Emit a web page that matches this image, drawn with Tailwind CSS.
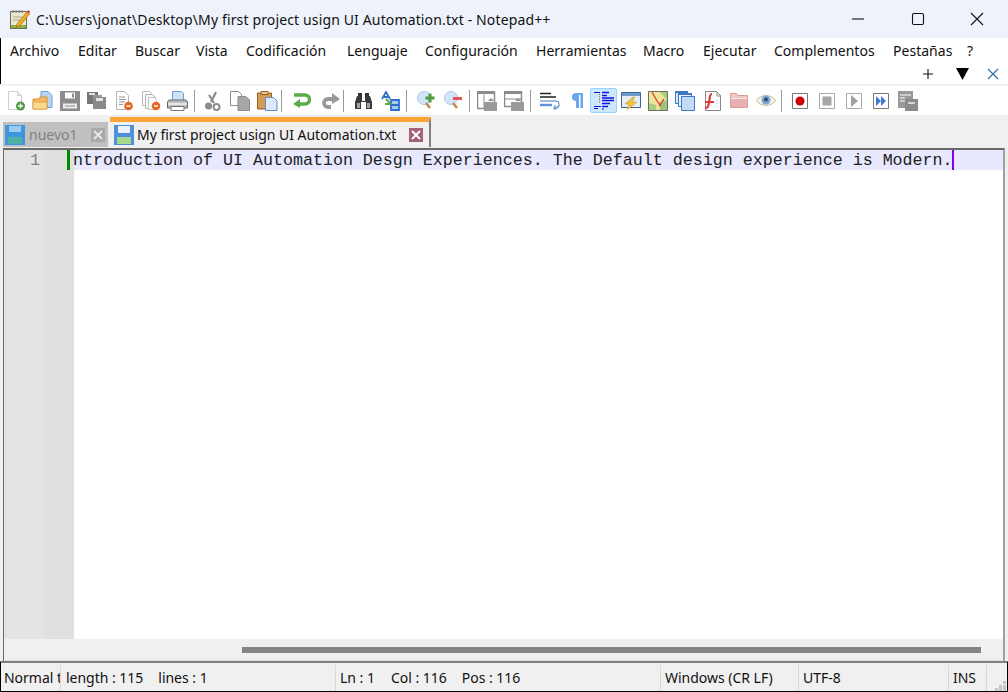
<!DOCTYPE html>
<html lang="es">
<head>
  <meta charset="UTF-8" />
  <title>Notepad++</title>
  <script src="https://cdn.jsdelivr.net/npm/@tailwindcss/browser@4"></script>
</head>
<body class="bg-[#f0f0f0]">
  <div class="w-[1008px] h-[692px] overflow-hidden flex flex-col font-['Noto_Sans','Open_Sans',sans-serif] text-[#111] border-b border-black">

    <!-- title bar -->
    <div class="h-[38px] shrink-0 bg-[#eef3fb] flex items-center">
      <svg class="ml-[10px] w-[20px] h-[20px]" viewBox="0 0 20 20">
        <rect x="0.5" y="2.5" width="16" height="17" fill="#e9e6d0" stroke="#6b6b5c"/>
        <path d="M1 16h15v3H1z" fill="#8fae3f"/>
        <path d="M3 1v3M6 1v3M9 1v3M12 1v3" stroke="#777"/>
        <path d="M3 8h9M3 11h7" stroke="#a9a78f"/>
        <path d="M7 15 17 3l2.500 2L10 16.500 6.500 18z" fill="#f0b11f" stroke="#a8620c" stroke-width="0.700"/>
        <path d="M17 3l1.500-2 1.500 1.500-1 2.500z" fill="#d8452e"/>
      </svg>
      <span class="ml-[6px] text-[14px] tracking-[0.14px] whitespace-nowrap">C:\Users\jonat\Desktop\My first project usign UI Automation.txt - Notepad++</span>
      <div class="ml-auto flex items-center">
        <svg class="w-[14px] h-[14px] mr-[46px]" viewBox="0 0 14 14"><path d="M1 7h12" stroke="#111" stroke-width="1.100"/></svg>
        <svg class="w-[14px] h-[14px] mr-[45px]" viewBox="0 0 14 14"><rect x="1.500" y="1.500" width="11" height="11" rx="1.500" fill="none" stroke="#111" stroke-width="1.100"/></svg>
        <svg class="w-[14px] h-[14px] mr-[24px]" viewBox="0 0 14 14"><path d="M1 1l12 12M13 1 1 13" stroke="#111" stroke-width="1.100"/></svg>
      </div>
    </div>

    <!-- menu -->
    <div class="h-[46px] shrink-0 bg-white border-l border-black">
      <div class="h-[25px] pl-[9px] flex items-center text-[14px] tracking-[0.02px] whitespace-nowrap">
        <span class="w-[68px]">Archivo</span>
        <span class="w-[57px]">Editar</span>
        <span class="w-[61px]">Buscar</span>
        <span class="w-[50px]">Vista</span>
        <span class="w-[101px]">Codificación</span>
        <span class="w-[78px]">Lenguaje</span>
        <span class="w-[111px]">Configuración</span>
        <span class="w-[107px]">Herramientas</span>
        <span class="w-[60px]">Macro</span>
        <span class="w-[71px]">Ejecutar</span>
        <span class="w-[119px]">Complementos</span>
        <span class="w-[74px]">Pestañas</span>
        <span>?</span>
      </div>
      <div class="h-[21px] flex items-center justify-end pr-[9px]">
        <svg class="w-[10px] h-[10px]" viewBox="0 0 10 10"><path d="M5 0v10M0 5h10" stroke="#111" stroke-width="1.100"/></svg>
        <svg class="ml-[23px] w-[13px] h-[13px]" viewBox="0 0 13 13"><path d="M0 1h13L6.500 13z" fill="#000"/></svg>
        <svg class="ml-[18px] w-[12px] h-[12px]" viewBox="0 0 12 12"><path d="M1 1l10 10M11 1 1 11" stroke="#33679c" stroke-width="1.100"/></svg>
      </div>
    </div>

    <!-- toolbar -->
    <div class="h-[32px] shrink-0 pt-[2px] pb-[1px]">
      <div class="h-[29px] bg-white flex items-center pl-[2px]">
        <!-- new -->
        <div class="w-[27px] h-[24px] flex items-center justify-center"><svg class="w-[20px] h-[20px]" viewBox="0 0 20 20">
          <path d="M2.500 0.500h9l4 4v14h-13z" fill="#fff" stroke="#cfcfcf"/><path d="M11.500 0.500v4h4" fill="#eee" stroke="#cfcfcf"/>
          <circle cx="14.500" cy="15" r="4.500" fill="#4d9a42"/><path d="M12 15h5M14.500 12.500v5" stroke="#fff" stroke-width="1.300"/></svg></div>
        <!-- open -->
        <div class="w-[27px] h-[24px] flex items-center justify-center"><svg class="w-[21px] h-[20px]" viewBox="0 0 21 20">
          <path d="M9 0.500h7l4 4v12H9z" fill="#b8d3f3" stroke="#6e9fd8"/>
          <path d="M1 8h6l1-2h7v12H1z" fill="#f4b860" stroke="#d8923a"/><path d="M1 11h14v7H1z" fill="#fbd98a" stroke="#d8923a" stroke-width="0.600"/></svg></div>
        <!-- save -->
        <div class="w-[27px] h-[24px] flex items-center justify-center"><svg class="w-[20px] h-[20px]" viewBox="0 0 20 20">
          <path d="M0 0h20v20H0z" fill="#8c8c8c"/><path d="M5 1.500h10v6H5z" fill="#fff"/><path d="M12 2.500h2v4h-2z" fill="#8c8c8c"/><path d="M3 12.500h14v5H3z" fill="#eee"/><path d="M5 14.500h10v1H5z" fill="#8c8c8c"/></svg></div>
        <!-- save all -->
        <div class="w-[27px] h-[24px] flex items-center justify-center"><svg class="w-[19px] h-[19px]" viewBox="0 0 19 19">
          <path d="M0 1h11v4h-5v8H0z" fill="#777"/><path d="M2 2h6v2H2z" fill="#ddd"/>
          <path d="M6 6h13v12H6z" fill="#8a8a8a"/><path d="M6 4h9v2H6z" fill="#999"/><path d="M9 7h7v3H9z" fill="#e6e6e6"/></svg></div>
        <!-- close -->
        <div class="w-[27px] h-[24px] flex items-center justify-center"><svg class="w-[20px] h-[20px]" viewBox="0 0 20 20">
          <path d="M2.500 0.500h8l4 4v14h-12z" fill="#fff" stroke="#b5b5b5"/><path d="M5 6h6M5 8.500h7M5 11h6M5 13.500h4" stroke="#999"/>
          <circle cx="14.500" cy="15" r="4.300" fill="#e8651f"/><path d="M12.500 15h4" stroke="#fff" stroke-width="1.500"/></svg></div>
        <!-- close all -->
        <div class="w-[27px] h-[24px] flex items-center justify-center"><svg class="w-[20px] h-[20px]" viewBox="0 0 20 20">
          <path d="M1.500 0.500h7l3 3v11h-10z" fill="#fff" stroke="#b5b5b5"/><path d="M4.500 3.500h7l3 3v11h-10z" fill="#f8f8f8" stroke="#b5b5b5"/><path d="M7.500 6.500h6l2 2v10h-8z" fill="#fff" stroke="#c2c2c2"/>
          <circle cx="15" cy="15" r="4.300" fill="#e8651f"/><path d="M13 15h4" stroke="#fff" stroke-width="1.500"/></svg></div>
        <!-- print -->
        <div class="w-[27px] h-[24px] flex items-center justify-center"><svg class="w-[21px] h-[20px]" viewBox="0 0 21 20">
          <path d="M5.500 0.500h9l2 2v8h-11z" fill="#cfe2f6" stroke="#6e9fd8"/>
          <path d="M2 9h17l1.500 2v6h-20v-6z" fill="#b9bec4" stroke="#666"/><path d="M1 12h19v2H1z" fill="#e8e8e8"/><path d="M4 15.500h13v4H4z" fill="#fff" stroke="#777"/></svg></div>
        <div class="w-px h-[22px] bg-[#999] ml-[3px] mr-[4px]"></div>
        <!-- cut -->
        <div class="w-[27px] h-[24px] flex items-center justify-center"><svg class="w-[17px] h-[20px]" viewBox="0 0 17 20">
          <path d="M12 1 7 11M5 4l5 8" stroke="#8c8c8c" stroke-width="2.200" fill="none"/><circle cx="4.500" cy="15" r="3.500" fill="#8c8c8c"/><circle cx="12.500" cy="16" r="3" fill="none" stroke="#8c8c8c" stroke-width="2"/></svg></div>
        <!-- copy -->
        <div class="w-[27px] h-[24px] flex items-center justify-center"><svg class="w-[20px] h-[20px]" viewBox="0 0 20 20">
          <path d="M0.500 0.500h8l3 3v11H0.500z" fill="#fff" stroke="#8c8c8c"/><path d="M8 5.500h8l3.500 3.500v10.500H8z" fill="#a6a6a6" stroke="#8c8c8c"/></svg></div>
        <!-- paste -->
        <div class="w-[27px] h-[24px] ml-[1px] flex items-center justify-center"><svg class="w-[21px] h-[20px]" viewBox="0 0 21 20">
          <path d="M0.500 2h14v16H0.500z" fill="#d49b57" stroke="#8f5f28"/><path d="M4 0.500h7v3H4z" fill="#f0c58c" stroke="#8f5f28"/>
          <path d="M8.500 6.500h8l3.500 3.500v9.500H8.500z" fill="#dceafa" stroke="#5d8fcf"/></svg></div>
        <div class="w-px h-[22px] bg-[#999] mr-[7px]"></div>
        <!-- undo -->
        <div class="w-[27px] h-[24px] flex items-center justify-center"><svg class="w-[20px] h-[18px]" viewBox="0 0 20 18">
          <path d="M1 3h11a4 4 0 0 1 0 9H6" fill="none" stroke="#5cab4a" stroke-width="3.400"/><path d="M7 7v9L0 12z" fill="#5cab4a"/></svg></div>
        <!-- redo -->
        <div class="w-[27px] h-[24px] flex items-center justify-center"><svg class="w-[20px] h-[18px]" viewBox="0 0 20 18">
          <path d="M18 7H8a4 4 0 0 0 0 8h3" fill="none" stroke="#999" stroke-width="3.800"/><path d="M12 1v11l8-5z" fill="#999"/></svg></div>
        <div class="w-px h-[22px] bg-[#999] mr-[6px]"></div>
        <!-- find -->
        <div class="w-[27px] h-[24px] flex items-center justify-center"><svg class="w-[17px] h-[16px]" viewBox="0 0 17 16">
          <path d="M3 0h4v3H3zM10 0h4v3h-4z" fill="#333"/><path d="M2 3h5v5h3V3h5l2 6v7h-6V9H6v7H0V9z" fill="#3a3a3a"/><path d="M2 10h3v5H2zM12 10h3v5h-3z" fill="#9aa5b0"/></svg></div>
        <!-- replace -->
        <div class="w-[27px] h-[24px] flex items-center justify-center"><svg class="w-[20px] h-[20px]" viewBox="0 0 20 20">
          <path d="M1 8 5 1l4 7M3 6h4" fill="none" stroke="#2f6fd0" stroke-width="1.800"/>
          <path d="M10 9h8v5h-8zM10 14h8v5h-8z" fill="#a9c9ef" stroke="#2f6fd0" stroke-width="1.800"/>
          <path d="M5 8l5 5M4 13l6 0" stroke="#58a94a" stroke-width="2"/></svg></div>
        <div class="w-px h-[22px] bg-[#999] ml-[2px] mr-[5px]"></div>
        <!-- zoom in -->
        <div class="w-[27px] h-[24px] flex items-center justify-center"><svg class="w-[18px] h-[19px]" viewBox="0 0 18 19">
          <circle cx="7" cy="7" r="6.500" fill="#d3e5f8" stroke="#a9c8ea"/><path d="M9 12l4 5" stroke="#c8894b" stroke-width="2.600"/><path d="M13 2.500v9M8.500 7h9" stroke="#4f9a3d" stroke-width="3"/></svg></div>
        <!-- zoom out -->
        <div class="w-[27px] h-[24px] flex items-center justify-center"><svg class="w-[18px] h-[19px]" viewBox="0 0 18 19">
          <circle cx="7" cy="7" r="6.500" fill="#d3e5f8" stroke="#a9c8ea"/><path d="M9 12l4 5" stroke="#c8894b" stroke-width="2.600"/><path d="M9 7.500h9" stroke="#e8505a" stroke-width="3"/></svg></div>
        <div class="w-px h-[22px] bg-[#999] ml-[3px] mr-[3px]"></div>
        <!-- sync v -->
        <div class="w-[27px] h-[24px] flex items-center justify-center"><svg class="w-[20px] h-[20px]" viewBox="0 0 20 20">
          <path d="M0.500 0.500h17v17H0.500z" fill="#fff" stroke="#8c8c8c" stroke-width="1.500"/><path d="M0 0h18v3H0z" fill="#8c8c8c"/><path d="M7 3.500v14" stroke="#8c8c8c"/><path d="M7 11h13v9H7z" fill="#9a9a9a"/><path d="M11 10l3-3 3 3z" fill="#8c8c8c"/></svg></div>
        <!-- sync h -->
        <div class="w-[27px] h-[24px] flex items-center justify-center"><svg class="w-[20px] h-[20px]" viewBox="0 0 20 20">
          <path d="M0.500 0.500h17v15H0.500z" fill="#fff" stroke="#8c8c8c" stroke-width="1.500"/><path d="M0 0h18v3H0z" fill="#8c8c8c"/><path d="M1 8h17" stroke="#8c8c8c"/><path d="M7 11h13v9H7z" fill="#9a9a9a"/><path d="M11 10l3-3 3 3z" fill="#8c8c8c"/></svg></div>
        <div class="w-px h-[22px] bg-[#999] ml-[3px] mr-[5px]"></div>
        <!-- wrap -->
        <div class="w-[27px] h-[24px] flex items-center justify-center"><svg class="w-[20px] h-[18px]" viewBox="0 0 20 18">
          <path d="M0 1.500h11M0 5h16" stroke="#222" stroke-width="1.400"/><path d="M0 9h16a3 3 0 0 1 3 3v2a1 1 0 0 1-2 0" fill="none" stroke="#3f78c4" stroke-width="1"/>
          <path d="M0 13h12" stroke="#5d93d8" stroke-width="2.400"/><path d="M18 16h-5M15 13v5" stroke="#3f78c4"/></svg></div>
        <!-- pilcrow -->
        <div class="w-[27px] h-[24px] flex items-center justify-center"><svg class="w-[12px] h-[15px]" viewBox="0 0 12 15">
          <path d="M5 0h7v15H9.500V2H8v13H5V8A4 4 0 0 1 5 0z" fill="#6ba7ec"/></svg></div>
        <!-- indent guide, pressed -->
        <div class="w-[27px] h-[25px] bg-[#cce8ff] border border-[#99d1ff] rounded-[2px] flex items-center justify-center"><svg class="w-[20px] h-[20px]" viewBox="0 0 20 20">
          <path d="M0 1.500h6M0 15.500h7M0 17.500h4" stroke="#1111dd"/><path d="M8 1.500h7M8 4.500h5M8 7h12M8 9.500h12M8 12.500h8M8 15.500h6" stroke="#1111dd" stroke-width="1.500"/>
          <path d="M5.500 3v10" stroke="#e02020" stroke-dasharray="1 1.500"/><path d="M8 18h2" stroke="#1111dd"/></svg></div>
        <!-- language -->
        <div class="w-[27px] h-[24px] flex items-center justify-center"><svg class="w-[20px] h-[18px]" viewBox="0 0 20 18">
          <path d="M0.500 0.500h19v15H0.500z" fill="#e3eefa" stroke="#41658f"/><path d="M1 1h18v3H1z" fill="#6f9ad0"/>
          <path d="M12 5 4 12h4l-2 6 10-8h-5l3-5z" fill="#f2c23e" stroke="#c8962a" stroke-width="0.500"/></svg></div>
        <!-- doc map -->
        <div class="w-[27px] h-[24px] flex items-center justify-center"><svg class="w-[20px] h-[20px]" viewBox="0 0 20 20">
          <path d="M0.500 0.500h19v19H0.500z" fill="#ece59a" stroke="#6e6e5a"/><path d="M1 12l7 2v5H1zM12 1h7v8z" fill="#a8cf82"/><path d="M12 12l7-3v10h-7z" fill="#9cc57a"/>
          <path d="M4 1l5 9 4 5M16 8l-5 7" fill="none" stroke="#d9483b" stroke-width="1.300"/></svg></div>
        <!-- doc list -->
        <div class="w-[27px] h-[24px] flex items-center justify-center"><svg class="w-[20px] h-[20px]" viewBox="0 0 20 20">
          <path d="M0.500 0.500h12v12h-12z" fill="#d5e6f8" stroke="#3f78c4"/><path d="M3.500 2.500h13v13h-13z" fill="#e7f0fb" stroke="#3f78c4"/><path d="M6.500 5.500h13v14h-13z" fill="#c4dbf5" stroke="#3f78c4"/><path d="M0 0h13v2H0zM3 2h14v2H3z" fill="#3f78c4"/></svg></div>
        <!-- function list -->
        <div class="w-[27px] h-[24px] flex items-center justify-center"><svg class="w-[20px] h-[20px]" viewBox="0 0 20 20">
          <path d="M3.500 0.500h11l4 4v15h-15z" fill="#fff" stroke="#888"/><path d="M15 1v4h4" fill="none" stroke="#888"/><path d="M15 9v9" stroke="#bbb" stroke-dasharray="1 2"/>
          <path d="M10 3C7 3 8 8 7 12s-1 5-4 5M3 11h9" fill="none" stroke="#dc3c3c" stroke-width="2.200"/></svg></div>
        <!-- folder -->
        <div class="w-[27px] h-[24px] flex items-center justify-center"><svg class="w-[18px] h-[15px]" viewBox="0 0 18 15">
          <path d="M0.500 14.500v-14h6l1 2h10v12z" fill="#f0c8c8" stroke="#dc9c9c"/><path d="M1 5h16v9H1z" fill="#e8b0b0"/><path d="M1 5h16v1H1z" fill="#fbe8e8"/></svg></div>
        <!-- eye -->
        <div class="w-[27px] h-[24px] flex items-center justify-center"><svg class="w-[20px] h-[15px]" viewBox="0 0 20 15">
          <path d="M0.500 7.500C4 1 16 1 19.500 7.500 16 14 4 14 0.500 7.500z" fill="#f3f3ea" stroke="#c9b98a"/><circle cx="10" cy="7" r="4.500" fill="#7ba6d4"/><circle cx="10" cy="6.500" r="2" fill="#2b4a70"/></svg></div>
        <div class="w-px h-[22px] bg-[#999] ml-[2px] mr-[4px]"></div>
        <!-- macro buttons -->
        <div class="w-[27px] h-[24px] flex items-center justify-center"><svg class="w-[16px] h-[16px]" viewBox="0 0 16 16">
          <path d="M0.500 0.500h15v15H0.500z" fill="#fff" stroke="#777"/><circle cx="8" cy="8" r="4.500" fill="#c00"/></svg></div>
        <div class="w-[27px] h-[24px] flex items-center justify-center"><svg class="w-[16px] h-[16px]" viewBox="0 0 16 16">
          <path d="M0.500 0.500h15v15H0.500z" fill="#fff" stroke="#aaa"/><path d="M3.500 3.500h9v9h-9z" fill="#a6a6a6"/></svg></div>
        <div class="w-[27px] h-[24px] flex items-center justify-center"><svg class="w-[16px] h-[16px]" viewBox="0 0 16 16">
          <path d="M0.500 0.500h15v15H0.500z" fill="#fff" stroke="#aaa"/><path d="M5 2l7 6-7 6z" fill="#a0a0a0"/></svg></div>
        <div class="w-[27px] h-[24px] flex items-center justify-center"><svg class="w-[16px] h-[16px]" viewBox="0 0 16 16">
          <path d="M0.500 0.500h15v15H0.500z" fill="#fff" stroke="#777"/><path d="M3 3l5 5-5 5zM8 3l5 5-5 5z" fill="#3f78d8"/></svg></div>
        <div class="w-[27px] h-[24px] flex items-center justify-center"><svg class="w-[20px] h-[20px]" viewBox="0 0 20 20">
          <path d="M0 0h15v17H0z" fill="#9a9a9a"/><path d="M2 4h11M2 7h5M2 10h5" stroke="#fff"/><path d="M7 8h13v12H7z" fill="#8c8c8c"/><path d="M10 12h7" stroke="#eee" stroke-width="1.500"/></svg></div>
      </div>
    </div>

    <!-- tabs -->
    <div class="h-[32px] shrink-0 pl-[3px] flex items-end">
      <div class="w-[105px] h-[25px] bg-[#c0c0c0] flex items-center pl-[2px] mr-[2px] mb-px">
        <svg class="w-[20px] h-[20px]" viewBox="0 0 20 20">
          <path d="M0 0h20v20H0z" fill="#3f96e0"/><path d="M4 1h12v6H4z" fill="#9ccaf0"/><path d="M3 12h14v7H3z" fill="#4fb0a8"/></svg>
        <span class="ml-[4px] text-[14px] text-[#808080]">nuevo1</span>
        <span class="ml-auto mr-[3px] w-[14px] h-[14px] bg-[#a8a8a8] flex items-center justify-center">
          <svg class="w-[10px] h-[10px]" viewBox="0 0 10 10"><path d="M1 1l8 8M9 1 1 9" stroke="#e8e8e8" stroke-width="2"/></svg></span>
      </div>
      <div class="w-[321px] h-[30px] bg-[#f0f0f0] border-r-2 border-r-[#808080] border-t-[5px] border-t-[#fba537] flex items-center pl-[4px] mb-px">
        <svg class="w-[20px] h-[20px]" viewBox="0 0 20 20">
          <path d="M0 0h20v20H0z" fill="#4d8fd8"/><path d="M4 1h12v7H4z" fill="#e8f2fc"/><path d="M3 12h14v7H3z" fill="#a8d890"/></svg>
        <span class="ml-[3px] text-[14px] tracking-[-0.02px] whitespace-nowrap">My first project usign UI Automation.txt</span>
        <span class="ml-auto mr-[6px] w-[14px] h-[14px] bg-[#a5607a] flex items-center justify-center">
          <svg class="w-[10px] h-[10px]" viewBox="0 0 10 10"><path d="M1 1l8 8M9 1 1 9" stroke="#fff" stroke-width="2"/></svg></span>
      </div>
    </div>

    <!-- editor -->
    <div class="flex-1 min-h-0 ml-[3px] mr-[3px] border-t-2 border-l border-t-[#696969] border-l-[#696969] border-r-2 border-r-[#a0a0a0] flex flex-col">
      <div class="flex-1 min-h-0 flex bg-white">
        <div class="w-[39px] bg-[#e4e4e4] font-['Liberation_Mono',monospace] text-[16.67px] leading-[22px] text-[#808080] text-right pr-[3px]">1</div>
        <div class="w-[31px] bg-[#e0e0e0]">
          <div class="ml-[24px] w-[3px] h-[20px] bg-[#008a00]"></div>
        </div>
        <div class="flex-1 h-[20px] bg-[#e8e8ff] font-['Liberation_Mono',monospace] text-[16.67px] leading-[22px] text-[#222] whitespace-pre flex"><span class="-ml-px">ntroduction of UI Automation Desgn Experiences. The Default design experience is Modern.</span><span class="-ml-px w-[2px] h-[20px] bg-[#8000ff]"></span></div>
      </div>
      <div class="h-[22px] shrink-0 bg-[#f0f0f0] border-b border-b-[#dcdcdc] flex items-center">
        <div class="ml-[238px] w-[739px] h-[6px] bg-[#858585]"></div>
      </div>
    </div>

    <!-- status bar -->
    <div class="h-[30px] shrink-0 border-t-2 border-t-[#808080] border-l border-l-black border-r border-r-black flex items-center text-[14px] tracking-[-0.02px] whitespace-nowrap pt-[1px]">
      <div class="w-[60px] h-[26px] pl-[3px] overflow-hidden border-r border-r-[#d8d8d8] leading-[26px]">Normal t</div>
      <div class="w-[275px] h-[26px] pl-[5px] border-r border-r-[#d8d8d8] leading-[26px]">length : 115<span class="ml-[15px]">lines : 1</span></div>
      <div class="w-[325px] h-[26px] pl-[4px] border-r border-r-[#d8d8d8] leading-[26px]">Ln : 1<span class="ml-[16px]">Col : 116</span><span class="ml-[15px]">Pos : 116</span></div>
      <div class="w-[138px] h-[26px] pl-[4px] border-r border-r-[#d8d8d8] leading-[26px]">Windows (CR LF)</div>
      <div class="w-[150px] h-[26px] pl-[4px] border-r border-r-[#d8d8d8] leading-[26px]">UTF-8</div>
      <div class="w-[38px] h-[26px] pl-[4px] border-r border-r-[#d8d8d8] leading-[26px]">INS</div>
      <svg class="ml-auto self-end w-[12px] h-[12px]" viewBox="0 0 12 12"><path d="M8 2h3v3H8zM4 6h3v3H4zM8 6h3v3H8zM0 9h3v3H0zM4 9h3v3H4zM8 9h3v3H8z" fill="#c4c4c4"/></svg>
    </div>
  </div>
</body>
</html>
